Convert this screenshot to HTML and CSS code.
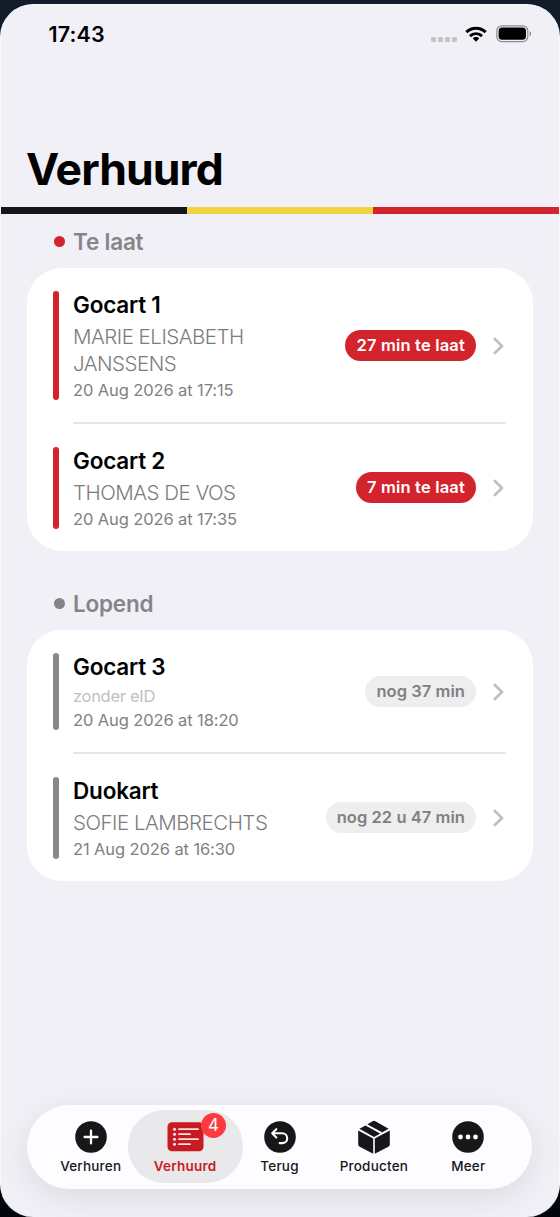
FILE: index.html
```html
<!DOCTYPE html>
<html lang="nl">
<head>
<meta charset="utf-8">
<meta name="viewport" content="width=device-width, initial-scale=1">
<title>Verhuurd</title>
<link rel="stylesheet" href="styles.css">
</head>
<body>
<div class="screen">
  <header class="status">
    <span class="clock">17:43</span>
    <div class="indicators">
      <div class="signal"><i></i><i></i><i></i><i></i></div>
      <svg class="wifi" width="22" height="17" viewBox="0 0 22 17" fill="none" stroke="#000">
        <path d="M1.3 6.1C6.8.8 15.2.8 20.7 6.1" stroke-width="3"/>
        <path d="M5 10.1C8.4 6.8 13.6 6.8 17 10.1" stroke-width="2.9"/>
        <path d="M11 11.1C9.7 11.1 8.6 11.6 7.8 12.4L11 15.8L14.2 12.4C13.4 11.6 12.3 11.1 11 11.1Z" fill="#000" stroke="none"/>
      </svg>
      <svg class="battery" width="36" height="18" viewBox="0 0 36 18">
        <rect x=".8" y=".8" width="31" height="15.8" rx="5" fill="none" stroke="#8b8b90" stroke-width="1.2"/>
        <rect x="2.6" y="2.6" width="27.4" height="12.2" rx="3.6"/>
        <path d="M33.6 6.2C35.6 7.2 35.6 10.4 33.6 11.4Z" fill="#8b8b90"/>
      </svg>
    </div>
  </header>
  <h1 class="title">Verhuurd</h1>
  <div class="flag"><i class="black"></i><i class="yellow"></i><i class="red"></i></div>

  <main class="content">
    <section class="late">
      <h2 class="heading">Te laat</h2>
      <div class="card">
        <article class="row">
          <span class="bar"></span>
          <div class="info">
            <h3>Gocart 1</h3>
            <p class="name">MARIE ELISABETH<br>JANSSENS</p>
            <p class="date">20 Aug 2026 at 17:15</p>
          </div>
          <span class="pill">27 min te laat</span>
          <svg class="chevron" viewBox="0 0 11 18"><path d="M1.8 2L9 9L1.8 16"/></svg>
        </article>
        <article class="row">
          <span class="bar"></span>
          <div class="info">
            <h3>Gocart 2</h3>
            <p class="name">THOMAS DE VOS</p>
            <p class="date">20 Aug 2026 at 17:35</p>
          </div>
          <span class="pill">7 min te laat</span>
          <svg class="chevron" viewBox="0 0 11 18"><path d="M1.8 2L9 9L1.8 16"/></svg>
        </article>
      </div>
    </section>
    <section class="running">
      <h2 class="heading">Lopend</h2>
      <div class="card">
        <article class="row">
          <span class="bar"></span>
          <div class="info">
            <h3>Gocart 3</h3>
            <p class="no-id">zonder eID</p>
            <p class="date">20 Aug 2026 at 18:20</p>
          </div>
          <span class="pill">nog 37 min</span>
          <svg class="chevron" viewBox="0 0 11 18"><path d="M1.8 2L9 9L1.8 16"/></svg>
        </article>
        <article class="row">
          <span class="bar"></span>
          <div class="info">
            <h3>Duokart</h3>
            <p class="name">SOFIE LAMBRECHTS</p>
            <p class="date">21 Aug 2026 at 16:30</p>
          </div>
          <span class="pill">nog 22 u 47 min</span>
          <svg class="chevron" viewBox="0 0 11 18"><path d="M1.8 2L9 9L1.8 16"/></svg>
        </article>
      </div>
    </section>
  </main>

  <nav class="tabs">
    <a class="tab">
      <svg width="32" height="32" viewBox="0 0 32 32"><circle cx="16" cy="16" r="15.8" fill="#17171a"/><path d="M16 9.6V22.4M9.6 16H22.4" stroke="#fff" stroke-width="2.3" stroke-linecap="round"/></svg>
      <span>Verhuren</span>
    </a>
    <a class="tab active">
      <svg width="37" height="32" viewBox="0 0 37 32"><rect x=".5" y="1.2" width="36" height="29" rx="4.5" fill="#c81a22"/><g fill="#f3e6e8"><circle cx="7.5" cy="8.2" r="1.5"/><circle cx="7.5" cy="13.2" r="1.5"/><circle cx="7.5" cy="18.2" r="1.5"/><circle cx="7.5" cy="23.2" r="1.5"/></g><path d="M12 8.2H31M12 13.2H23M12 18.2H31M12 23.2H23" stroke="#f3e6e8" stroke-width="1.8" stroke-linecap="round"/></svg>
      <b class="badge">4</b>
      <span>Verhuurd</span>
    </a>
    <a class="tab">
      <svg width="32" height="32" viewBox="0 0 32 32"><circle cx="16" cy="16" r="15.8" fill="#17171a"/><path d="M12.3 8.2L8.2 12.3L12.3 16.4M8.6 12.3H18.3A4.9 4.9 0 0 1 18.3 22.1H15.6" fill="none" stroke="#fff" stroke-width="2.1" stroke-linecap="round" stroke-linejoin="round"/></svg>
      <span>Terug</span>
    </a>
    <a class="tab">
      <svg width="32" height="34" viewBox="0 0 32 34" fill="#17171a"><path d="M.2 10.4L15.2 18.5V33.8L1.7 26.7Q.2 25.9 .2 24.3Z"/><path d="M31.8 10.4L16.8 18.5V33.8L30.3 26.7Q31.8 25.9 31.8 24.3Z"/><path d="M1.4 8.7L7.5 5.4L22.3 13.6L16 17Z"/><path d="M9.1 4.5L14.6 1.2Q16 .4 17.4 1.2L30.7 8.7L24 12.5Z"/><path d="M8.2 4.6L23.4 13" stroke="#fdfcff" stroke-width="1.6"/></svg>
      <span>Producten</span>
    </a>
    <a class="tab">
      <svg width="32" height="32" viewBox="0 0 32 32"><circle cx="16" cy="16" r="15.8" fill="#17171a"/><g fill="#fff"><circle cx="8.5" cy="16" r="2.4"/><circle cx="16" cy="16" r="2.4"/><circle cx="23.5" cy="16" r="2.4"/></g></svg>
      <span>Meer</span>
    </a>
  </nav>
</div>
</body>
</html>
```
FILE: styles.css
```css
* { box-sizing: border-box; }
body {
  margin: 0;
  padding: 4px 0 0;
  height: 1217px;
  overflow: hidden;
  background: linear-gradient(#131c2b, #03050c);
  font-family: Inter, "Liberation Sans", sans-serif;
  color: #000;
}
h1, h2, h3, p { margin: 0; }
.screen {
  display: flex;
  flex-direction: column;
  height: 1213px;
  padding-bottom: 28px;
  border-radius: 33px;
  border: 1px solid #f8f8fb;
  border-bottom-width: 0;
  background: #f1f0f6;
  overflow: hidden;
}
.status {
  display: flex;
  justify-content: space-between;
  align-items: center;
  height: 58px;
  padding: 0 27px 0 47.5px;
}
.clock { font-size: 21.5px; font-weight: 570; letter-spacing: .15px; }
.indicators { display: flex; align-items: center; }
.signal { display: flex; gap: 2px; margin: 11px 8px 0 0; }
.signal i { width: 5px; height: 5px; border-radius: 1.5px; background: #c3c3c8; }
.wifi { margin-right: 9px; }
.title {
  height: 144px;
  padding: 76px 25px 0;
  font-size: 44.5px;
  line-height: 60px;
  font-weight: 700;
  letter-spacing: -.9px;
}
.flag { display: flex; height: 6.5px; flex: none; }
.flag i { flex: 1; }
.flag .black { background: #15171b; }
.flag .yellow { background: #f2d43f; }
.flag .red { background: #d3242d; }
.content { padding: 0 26px; }
.heading {
  display: flex;
  align-items: center;
  gap: 8.5px;
  height: 54.5px;
  padding: 1px 0 0 26.5px;
  font-size: 22.5px;
  font-weight: 560;
  letter-spacing: -.2px;
  color: #858589;
}
.heading::before {
  content: "";
  width: 11px;
  height: 11px;
  border-radius: 50%;
  background: #858589;
}
.late .heading::before { background: #d3242d; }
.running { padding-top: 24.5px; }
.card { border-radius: 35px; background: #fff; padding: 0 27.5px 0 26px; }
.row {
  display: flex;
  align-items: center;
  position: relative;
  padding: 23px 0 22.5px;
}
.row + .row { padding-top: 24px; }
.row + .row::before {
  content: "";
  position: absolute;
  top: -.5px;
  left: 20px;
  right: 0;
  height: 1.6px;
  background: #e6e6e7;
}
.bar { align-self: stretch; width: 6px; border-radius: 3px; background: #88888a; margin-right: 14px; }
.late .bar { background: #d3242d; }
.info { flex: 1; display: flex; flex-direction: column; gap: 4px; white-space: nowrap; }
.info h3 { font-size: 22.5px; line-height: 28px; font-weight: 600; letter-spacing: -.2px; }
.name { font-size: 20.5px; line-height: 27px; color: #7c7c7e; font-weight: 340; letter-spacing: -.5px; }
.date { font-size: 16.5px; line-height: 19px; color: #808082; letter-spacing: -.11px; }
.no-id { font-size: 16.5px; line-height: 22px; color: #bfbfc1; letter-spacing: -.3px; }
.pill {
  height: 30.5px;
  padding: 0 11px;
  border-radius: 16px;
  font-size: 16.5px;
  line-height: 30px;
  font-weight: 560;
  letter-spacing: .05px;
  white-space: nowrap;
  background: #eee;
  color: #808082;
}
.late .pill { background: #d3242d; color: #fff; letter-spacing: .18px; }
.chevron { width: 11px; height: 18px; margin: 0 2px 0 16.5px; fill: none; stroke: #bfbfc1; stroke-width: 2.7; stroke-linecap: round; stroke-linejoin: round; }
.tabs {
  display: flex;
  flex: none;
  height: 84px;
  margin: auto 27px 0 26px;
  padding: 5px 16.5px;
  border-radius: 42px;
  background: #fdfcff;
  box-shadow: 0 8px 34px rgba(0, 0, 0, .09);
}
.tab {
  position: relative;
  z-index: 0;
  flex: 1 1 0;
  min-width: 0;
  display: flex;
  flex-direction: column;
  align-items: center;
  justify-content: space-between;
  padding: 10px 0 9px;
  font-size: 13.5px;
  line-height: 18px;
  font-weight: 500;
  letter-spacing: .2px;
  color: #17171a;
}
.tab svg { height: 34px; flex: none; }
.active { color: #c81a22; font-weight: 600; }
.active::before {
  content: "";
  position: absolute;
  z-index: -1;
  top: 0;
  bottom: 1px;
  left: -10px;
  right: -10.5px;
  border-radius: 36px;
  background: #e9e8eb;
}
.badge {
  position: absolute;
  top: 2.5px;
  left: 63px;
  width: 25px;
  height: 25px;
  border-radius: 50%;
  background: #fe3a3e;
  color: #fff;
  font-size: 17px;
  line-height: 25px;
  font-weight: 400;
  letter-spacing: 0;
  text-align: center;
}
```
